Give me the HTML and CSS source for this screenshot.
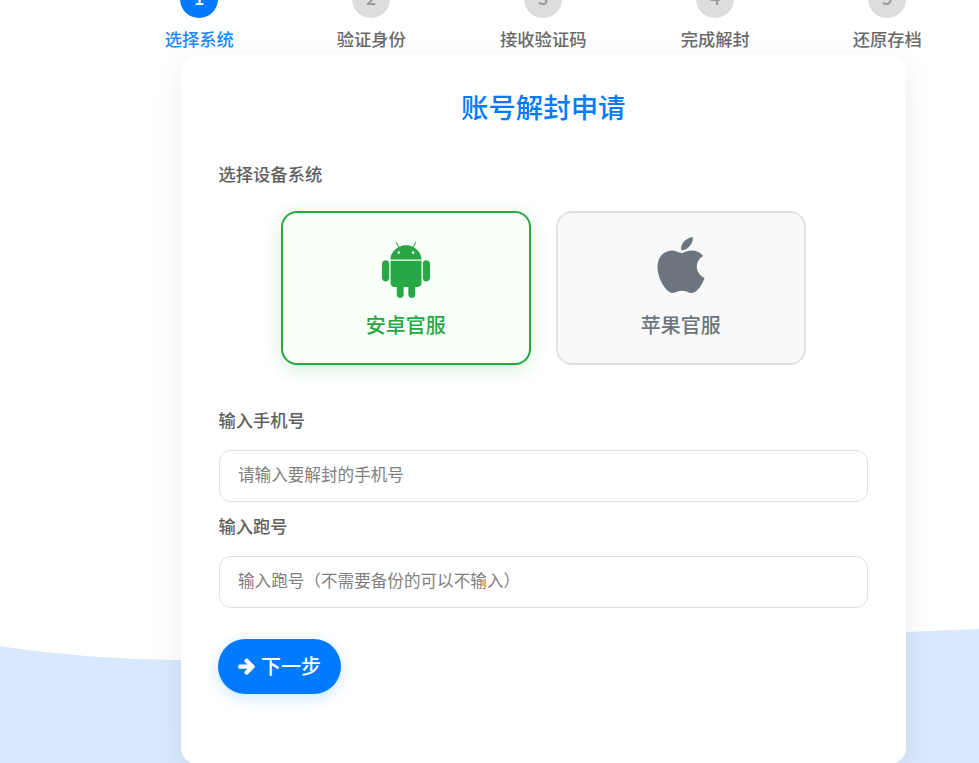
FILE: index.html
```html
<!DOCTYPE html>
<html lang="zh-CN">
<head>
  <meta charset="UTF-8">
  <meta name="viewport" content="width=device-width, initial-scale=1.0">
  <title>账号解封申请</title>
  <link rel="stylesheet" href="styles.css">
</head>
<body>

  <svg class="wave" viewBox="0 0 979 140" preserveAspectRatio="none" aria-hidden="true">
    <path d="M0 23C60 32 110 36 181 37C340 38 500 24 680 16C790 12 880 9 906 9C930 8 950 7 979 6V140H0Z"/>
  </svg>

  <div class="page">
    <div class="steps">
      <div class="step active"><span class="step-num">1</span><span class="step-label">选择系统</span></div>
      <div class="step"><span class="step-num">2</span><span class="step-label">验证身份</span></div>
      <div class="step"><span class="step-num">3</span><span class="step-label">接收验证码</span></div>
      <div class="step"><span class="step-num">4</span><span class="step-label">完成解封</span></div>
      <div class="step"><span class="step-num">5</span><span class="step-label">还原存档</span></div>
    </div>

    <div class="card">
      <h1>账号解封申请</h1>

      <label class="field-label">选择设备系统</label>
      <div class="devices">
        <div class="device android">
          <svg class="device-icon" viewBox="0 0 448 512"><path d="M89.6 204.5v115.8c0 15.4-12.1 27.7-27.5 27.7-15.3 0-30.1-12.4-30.1-27.7V204.5c0-15.1 14.8-27.5 30.1-27.5 15.1 0 27.5 12.4 27.5 27.5zm10.8 157c0 16.4 13.2 29.6 29.6 29.6h19.9l.3 61.1c0 36.9 55.2 36.6 55.2 0v-61.1h37.2v61.1c0 36.7 55.5 36.8 55.5 0v-61.1h20.2c16.2 0 29.4-13.2 29.4-29.6V182.1H100.4v179.4zm248-189.1H99.3c0-42.8 25.6-80 63.6-99.4l-19.1-35.3c-2.8-4.9 4.3-8 6.7-3.8l19.4 35.6c34.9-15.5 75-14.7 108.3 0L297.5 34c2.5-4.3 9.5-.9 6.7 3.8L285.1 73c37.7 19.4 63.3 56.6 63.3 99.4zm-170.7-55.5c0-5.7-4.6-10.5-10.5-10.5-5.7 0-10.2 4.8-10.2 10.5s4.6 10.5 10.2 10.5c5.9 0 10.5-4.8 10.5-10.5zm113.4 0c0-5.7-4.6-10.5-10.2-10.5-5.9 0-10.5 4.8-10.5 10.5s4.6 10.5 10.5 10.5c5.6 0 10.2-4.8 10.2-10.5zm94.8 60.1c-15.1 0-27.5 12.1-27.5 27.5v115.8c0 15.4 12.4 27.7 27.5 27.7 15.4 0 30.1-12.4 30.1-27.7V204.5c0-15.4-14.8-27.5-30.1-27.5z"/></svg>
          <span>安卓官服</span>
        </div>
        <div class="device">
          <svg class="device-icon" viewBox="0 0 384 512"><path d="M318.7 268.7c-.2-36.7 16.4-64.4 50-84.8-18.8-26.9-47.2-41.7-84.7-44.6-35.5-2.8-74.3 20.7-88.5 20.7-15 0-49.4-19.7-76.4-19.7C63.3 141.2 4 184.8 4 273.5q0 39.3 14.4 81.2c12.8 36.7 59 126.7 107.2 125.2 25.2-.6 43-17.9 75.8-17.9 31.8 0 48.3 17.9 76.4 17.9 48.6-.7 90.4-82.5 102.6-119.3-65.2-30.7-61.7-90-61.7-91.9zm-56.6-164.2c27.3-32.4 24.8-61.9 24-72.5-24.1 1.4-52 16.4-67.9 34.9-17.5 19.8-27.8 44.3-25.6 71.9 26.1 2 49.9-11.4 69.5-34.3z"/></svg>
          <span>苹果官服</span>
        </div>
      </div>

      <label class="field-label phone-label">输入手机号</label>
      <input class="text-input" type="text" placeholder="请输入要解封的手机号">

      <label class="field-label run-label">输入跑号</label>
      <input class="text-input" type="text" placeholder="输入跑号（不需要备份的可以不输入）">

      <button class="next-btn">
        <svg viewBox="-30 -30 508 572"><path d="M190.5 66.9l22.2-22.2c9.4-9.4 24.6-9.4 33.9 0L441 239c9.4 9.4 9.4 24.6 0 33.9L246.6 467.3c-9.4 9.4-24.6 9.4-33.9 0l-22.2-22.2c-9.5-9.5-9.3-25 .4-34.3L311.4 296H24c-13.3 0-24-10.7-24-24v-32c0-13.3 10.7-24 24-24h287.4L190.9 101.2c-9.8-9.3-10-24.8-.4-34.3z"/></svg>
        下一步
      </button>
    </div>
  </div>

</body>
</html>
```

FILE: styles.css
```css
html, body {
  height: 763px;
}
body {
  font-family: "Noto Sans CJK SC", "Noto Sans", sans-serif;
  margin: 0;
  padding: 0;
  background: #fff;
  overflow: hidden;
  position: relative;
}
.wave {
  position: absolute;
  left: 0;
  bottom: 0;
  width: 100%;
  height: 140px;
}
.wave path {
  fill: #d8e9fd;
}
.page {
  position: relative;
  margin-top: -20px;
  padding-left: 108px;
  width: 871px;
}

.steps {
  display: flex;
  width: 860px;
  margin: 0 0 3px 5.25px;
}
.step {
  flex: 1;
  display: flex;
  flex-direction: column;
  align-items: center;
  gap: 8px;
}
.step-num {
  width: 38px;
  height: 38px;
  border-radius: 50%;
  background: #ddd;
  color: #999;
  font-size: 18px;
  font-weight: 500;
  line-height: 35px;
  text-align: center;
}
.step-label {
  font-size: 17.3px;
  line-height: 26px;
  font-weight: 500;
  color: #6a6a6a;
}
.step.active .step-num {
  background: #007bff;
  color: #fff;
}
.step.active .step-label {
  color: #1a88ff;
}

.card {
  width: 725px;
  height: 709px;
  box-sizing: border-box;
  margin: 0 auto;
  padding: 30px 38px 0 37.5px;
  background: #fff;
  border-radius: 16px;
  box-shadow: 0 8px 32px rgba(0, 0, 0, 0.08);
}
h1 {
  margin: 0 0 34px;
  font-size: 27.4px;
  line-height: 42px;
  font-weight: 500;
  text-align: center;
  color: #007bff;
}
.field-label {
  display: block;
  font-size: 17.3px;
  line-height: 26px;
  font-weight: 500;
  color: #5f5f5f;
}
.devices {
  display: flex;
  justify-content: center;
  gap: 25px;
  margin-top: 24px;
}
.device {
  width: 250px;
  height: 154px;
  box-sizing: border-box;
  border: 2px solid #dfe1e3;
  border-radius: 16px;
  background: #f8f9fa;
  color: #6c757d;
  display: flex;
  flex-direction: column;
  align-items: center;
  padding-top: 20px;
  font-size: 20px;
  line-height: 30px;
  font-weight: 500;
}
.device-icon {
  height: 64px;
  fill: currentColor;
  margin-bottom: 13px;
}
.device.android {
  border-color: #28a745;
  background: #f8fff9;
  color: #28a745;
  box-shadow: 0 4px 20px rgba(40, 167, 69, 0.2);
}
.device.android .device-icon {
  margin-top: 5px;
  margin-bottom: 8px;
}
.phone-label {
  margin-top: 42px;
}
.run-label {
  margin-top: 11px;
}
.text-input {
  display: block;
  width: 100%;
  height: 52px;
  box-sizing: border-box;
  margin-top: 17px;
  padding: 0 19px 5px 18.5px;
  border: 1.5px solid #e0e0e0;
  border-radius: 12px;
  background: #fff;
  font-family: inherit;
  font-size: 16.6px;
  outline: none;
}
.text-input::placeholder {
  color: #808080;
}
.next-btn {
  display: flex;
  align-items: center;
  gap: 6px;
  height: 55px;
  margin-top: 31px;
  margin-left: -0.5px;
  padding: 0 20px 2px;
  border: none;
  border-radius: 28px;
  background: #007bff;
  color: #fff;
  font-family: inherit;
  font-size: 20px;
  font-weight: 500;
  box-shadow: 0 4px 15px rgba(0, 123, 255, 0.2);
  cursor: pointer;
}
.next-btn svg {
  width: 17px;
  height: 19.2px;
  margin-top: 3px;
  fill: currentColor;
  stroke: currentColor;
  stroke-width: 50;
}
```
